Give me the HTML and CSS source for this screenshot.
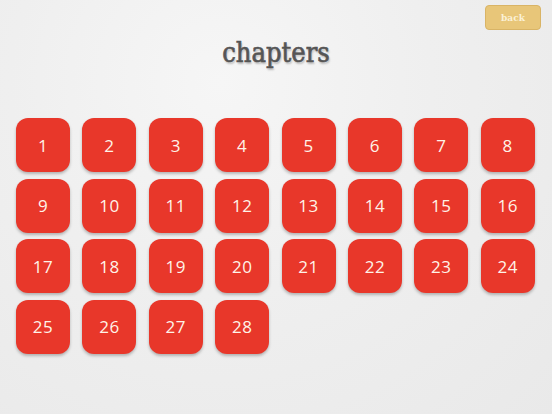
FILE: index.html
```html
<!DOCTYPE html>
<html>
<head>
<meta charset="utf-8">
<link rel="stylesheet" href="styles.css">
</head>
<body>
<div class="page">
  <div class="topbar"><button class="back">back</button></div>
  <h1 class="title">chapters</h1>
  <div class="grid">
    <div class="tile">1</div><div class="tile">2</div><div class="tile">3</div><div class="tile">4</div>
    <div class="tile">5</div><div class="tile">6</div><div class="tile">7</div><div class="tile">8</div>
    <div class="tile">9</div><div class="tile">10</div><div class="tile">11</div><div class="tile">12</div>
    <div class="tile">13</div><div class="tile">14</div><div class="tile">15</div><div class="tile">16</div>
    <div class="tile">17</div><div class="tile">18</div><div class="tile">19</div><div class="tile">20</div>
    <div class="tile">21</div><div class="tile">22</div><div class="tile">23</div><div class="tile">24</div>
    <div class="tile">25</div><div class="tile">26</div><div class="tile">27</div><div class="tile">28</div>
  </div>
</div>
</body>
</html>
```
FILE: styles.css
```css
html, body {
  margin: 0;
  padding: 0;
}
body {
  width: 552px;
  height: 414px;
  overflow: hidden;
  background: radial-gradient(ellipse at 40% 20%, #f6f6f6 0%, #efefef 45%, #e9e9e9 100%);
  font-family: "Open Sans", sans-serif;
}
.page {
  display: flex;
  flex-direction: column;
  padding: 5px 11px 0 16px;
}
.topbar {
  display: flex;
  justify-content: flex-end;
  height: 25px;
}
.back {
  width: 56px;
  height: 25px;
  border: 1px solid #d9b466;
  border-radius: 4px;
  background: #e8c679;
  color: #fbf1d6;
  font-family: "DejaVu Serif Condensed", "DejaVu Serif", serif;
  font-weight: bold;
  font-size: 10px;
  padding: 0;
}
.title {
  margin: 4px 0 0;
  margin-left: -5px;
  text-align: center;
  font-family: "DejaVu Serif Condensed", "DejaVu Serif", serif;
  font-weight: normal;
  font-size: 27px;
  line-height: 38px;
  letter-spacing: 0;
  color: #555;
  -webkit-text-stroke: 0.6px #555;
  text-shadow: 1px 2px 2px rgba(0,0,0,0.25);
  height: 38px;
}
.grid {
  margin-top: 46px;
  display: grid;
  grid-template-columns: repeat(8, 54px);
  column-gap: 12.4px;
  row-gap: 6.5px;
}
.tile {
  height: 54px;
  border-radius: 12px;
  background: #e8372a;
  box-shadow: 0 2px 3px rgba(0,0,0,0.25);
  color: #fff3e8;
  display: flex;
  align-items: center;
  justify-content: center;
  font-family: "Open Sans", sans-serif;
  font-weight: 500;
  font-size: 17px;
  letter-spacing: 0.5px;
}
```
